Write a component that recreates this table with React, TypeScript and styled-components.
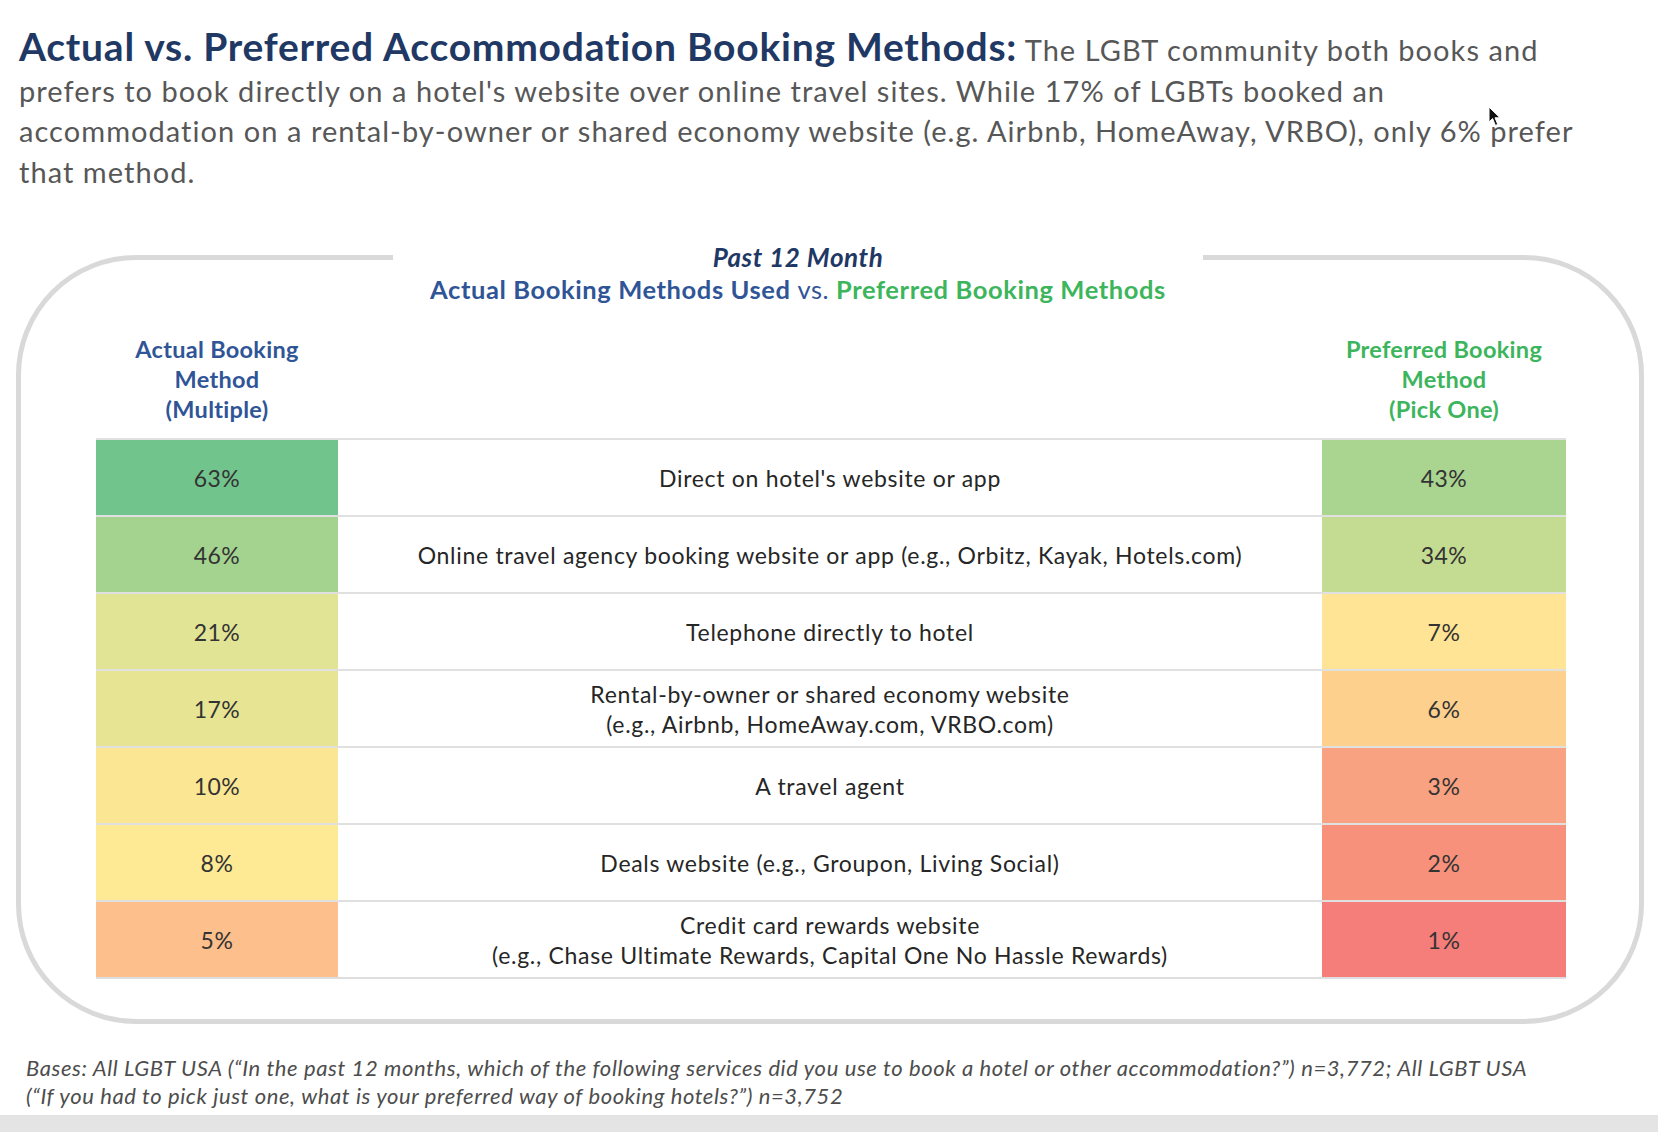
import styled, { createGlobalStyle } from "styled-components";

interface BookingRow {
	actual: string;
	actualColor: string;
	method: string[];
	preferred: string;
	preferredColor: string;
}

const rows: BookingRow[] = [
	{ actual: "63%", actualColor: "#71c48c", method: ["Direct on hotel's website or app"], preferred: "43%", preferredColor: "#a9d590" },
	{ actual: "46%", actualColor: "#a3d38f", method: ["Online travel agency booking website or app (e.g., Orbitz, Kayak, Hotels.com)"], preferred: "34%", preferredColor: "#c4dc92" },
	{ actual: "21%", actualColor: "#e2e495", method: ["Telephone directly to hotel"], preferred: "7%", preferredColor: "#fee494" },
	{ actual: "17%", actualColor: "#e7e594", method: ["Rental-by-owner or shared economy website", "(e.g., Airbnb, HomeAway.com, VRBO.com)"], preferred: "6%", preferredColor: "#fdd08e" },
	{ actual: "10%", actualColor: "#fbe793", method: ["A travel agent"], preferred: "3%", preferredColor: "#f9a281" },
	{ actual: "8%", actualColor: "#feea94", method: ["Deals website (e.g., Groupon, Living Social)"], preferred: "2%", preferredColor: "#f8917b" },
	{ actual: "5%", actualColor: "#fdbf8b", method: ["Credit card rewards website", "(e.g., Chase Ultimate Rewards, Capital One No Hassle Rewards)"], preferred: "1%", preferredColor: "#f67e7a" },
];

const GlobalStyle = createGlobalStyle`
	html, body {
		margin: 0;
		padding: 0;
		background: #ffffff;
	}
	body {
		font-family: Lato, "Open Sans", "Liberation Sans", sans-serif;
	}
`;

const Page = styled.div`
	position: relative;
	width: 1658px;
	height: 1132px;
	overflow: hidden;
	display: flex;
	flex-direction: column;
`;

const Intro = styled.p`
	margin: 0;
	padding: 30px 0 0 19px;
	font-size: 29px;
	letter-spacing: 1.05px;
	line-height: 40.5px;
	color: #575757;
	white-space: nowrap;
`;

const Lead = styled.span`
	font-size: 39px;
	letter-spacing: 0.75px;
	line-height: 30px;
	font-weight: 700;
	color: #1f3864;
`;

const ChartFrame = styled.fieldset`
	margin: 50px 14px 0 16px;
	padding: 0;
	min-width: 0;
	border: 5px solid #d9d9d9;
	border-radius: 120px;
`;

const ChartLegend = styled.legend`
	width: 810px;
	margin-left: 372px;
	padding: 0;
`;

const LegendText = styled.span`
	display: block;
	text-align: center;
	font-size: 26px;
	letter-spacing: 0.6px;
	line-height: 30px;
	font-weight: 700;
	font-style: italic;
	color: #1f3864;
`;

const ChartBody = styled.div`
	padding: 0 73px 40px 75px;
`;

const Subtitle = styled.div`
	width: 810px;
	margin-left: 297px;
	text-align: center;
	font-size: 25.5px;
	letter-spacing: 0.6px;
	line-height: 34px;
	font-weight: 700;
	color: #2f5597;
	span:nth-child(2) {
		font-weight: 400;
	}
	span:last-child {
		color: #3cb55c;
	}
`;

const HeadGrid = styled.div`
	display: grid;
	grid-template-columns: 242px 1fr 244px;
	margin-top: 28px;
	margin-bottom: 14px;
`;

const ColumnHead = styled.div<{ $tone: string }>`
	text-align: center;
	font-size: 23.5px;
	letter-spacing: 0.3px;
	line-height: 30px;
	font-weight: 700;
	color: ${(p) => p.$tone};
`;

const Table = styled.div`
	border-bottom: 2px solid #dedede;
`;

const TableRow = styled.div`
	display: grid;
	grid-template-columns: 242px 1fr 244px;
	height: 77px;
	box-sizing: border-box;
	border-top: 2px solid #e0e0e0;
`;

const ValueCell = styled.div<{ $bg: string }>`
	display: flex;
	align-items: center;
	justify-content: center;
	background: ${(p) => p.$bg};
	font-size: 23px;
	letter-spacing: 0.5px;
	color: #333333;
`;

const MethodCell = styled.div`
	display: flex;
	flex-direction: column;
	align-items: center;
	justify-content: center;
	font-size: 23px;
	letter-spacing: 0.7px;
	line-height: 30px;
	color: #262626;
	text-align: center;
`;

const Footnote = styled.p`
	margin: 30px 0 0 26px;
	font-size: 22px;
	letter-spacing: 0.6px;
	line-height: 28px;
	font-style: italic;
	color: #4d4d4d;
	white-space: nowrap;
`;

const BottomBand = styled.div`
	margin-top: auto;
	height: 17px;
	background: #e4e4e4;
`;

const Pointer = styled.svg`
	position: absolute;
	left: 1488px;
	top: 106px;
	width: 14px;
	height: 21px;
`;

export default function App() {
	return (
		<Page>
			<GlobalStyle />
			<Intro>
				<Lead>Actual vs. Preferred Accommodation Booking Methods:</Lead> The LGBT community both books and
				<br />
				prefers to book directly on a hotel's website over online travel sites. While 17% of LGBTs booked an
				<br />
				accommodation on a rental-by-owner or shared economy website (e.g. Airbnb, HomeAway, VRBO), only 6% prefer
				<br />
				that method.
			</Intro>

			<ChartFrame>
				<ChartLegend>
					<LegendText>Past 12 Month</LegendText>
				</ChartLegend>
				<ChartBody>
					<Subtitle>
						<span>Actual Booking Methods Used</span> <span>vs.</span>{" "}
						<span>Preferred Booking Methods</span>
					</Subtitle>
					<HeadGrid>
						<ColumnHead $tone="#2f5597">
							Actual Booking
							<br />
							Method
							<br />
							(Multiple)
						</ColumnHead>
						<div />
						<ColumnHead $tone="#3cb55c">
							Preferred Booking
							<br />
							Method
							<br />
							(Pick One)
						</ColumnHead>
					</HeadGrid>
					<Table>
						{rows.map((row) => (
							<TableRow key={row.actual + row.preferred}>
								<ValueCell $bg={row.actualColor}>{row.actual}</ValueCell>
								<MethodCell>
									{row.method.map((line) => (
										<span key={line}>{line}</span>
									))}
								</MethodCell>
								<ValueCell $bg={row.preferredColor}>{row.preferred}</ValueCell>
							</TableRow>
						))}
					</Table>
				</ChartBody>
			</ChartFrame>

			<Footnote>
				Bases: All LGBT USA (“In the past 12 months, which of the following services did you use to book a hotel or other accommodation?”) n=3,772; All LGBT USA
				<br />
				(“If you had to pick just one, what is your preferred way of booking hotels?”) n=3,752
			</Footnote>

			<BottomBand />

			<Pointer viewBox="0 0 14 21">
				<path d="M1 1 L1 16 L4.6 12.6 L7.4 19.4 L9.8 18.4 L7 11.8 L12 11.8 Z" fill="#111" stroke="#fff" strokeWidth="1" />
			</Pointer>
		</Page>
	);
}
